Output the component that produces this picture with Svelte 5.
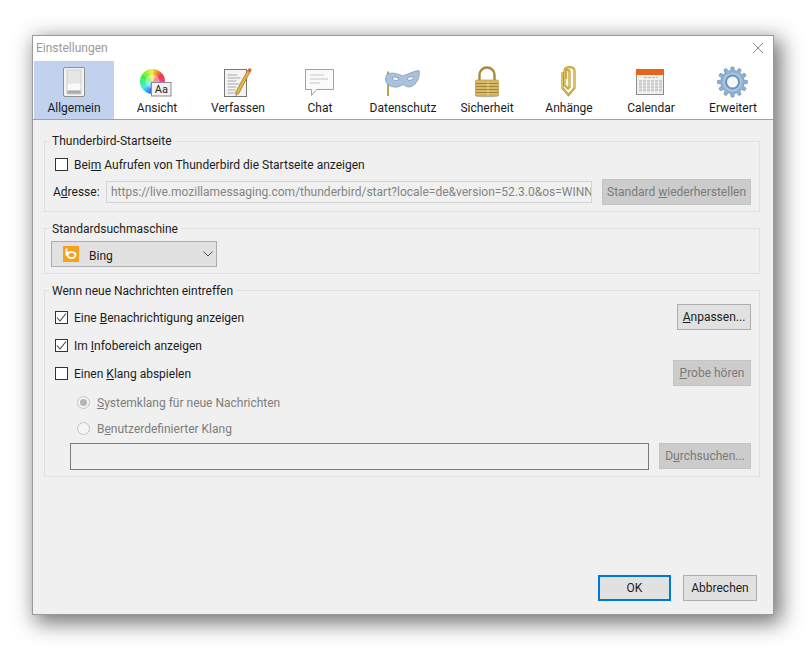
<script>
  const tabs = [
    { label: 'Allgemein', icon: 'general', gap: 0, active: true },
    { label: 'Ansicht', icon: 'view', gap: 3 },
    { label: 'Verfassen', icon: 'compose', gap: 1 },
    { label: 'Chat', icon: 'chat', gap: 2 },
    { label: 'Datenschutz', icon: 'mask', gap: 3 },
    { label: 'Sicherheit', icon: 'lock', gap: 4 },
    { label: 'Anhänge', icon: 'clip', gap: 2 },
    { label: 'Calendar', icon: 'calendar', gap: 2 },
    { label: 'Erweitert', icon: 'gear', gap: 2 }
  ];

  // colour wheel wedges, hue goes backwards clockwise from yellow at the top
  const wedges = [];
  for (let i = 0; i < 36; i++) {
    const a = (i * 10 - 90) * Math.PI / 180;
    const b = ((i + 1.2) * 10 - 90) * Math.PI / 180;
    const r = 12.5, cx = 15.5, cy = 15.5;
    wedges.push({
      d: `M${cx} ${cy}L${(cx + r * Math.cos(a)).toFixed(2)} ${(cy + r * Math.sin(a)).toFixed(2)}A${r} ${r} 0 0 1 ${(cx + r * Math.cos(b)).toFixed(2)} ${(cy + r * Math.sin(b)).toFixed(2)}Z`,
      fill: `hsl(${(50 - i * 10 + 360) % 360}, 85%, 58%)`
    });
  }

  // gear outline with 12 teeth
  function gearPath() {
    const cx = 19.5, cy = 16, outer = 15, root = 11.6, teeth = 12;
    let d = '';
    for (let i = 0; i < teeth; i++) {
      const s = (i / teeth) * Math.PI * 2;
      const w = (Math.PI * 2) / teeth;
      const pts = [
        [root, s - w * 0.32], [outer, s - w * 0.17], [outer, s + w * 0.17], [root, s + w * 0.32]
      ];
      for (const [r, a] of pts) {
        d += (d ? 'L' : 'M') + (cx + r * Math.cos(a)).toFixed(2) + ' ' + (cy + r * Math.sin(a)).toFixed(2);
      }
    }
    return d + 'Z';
  }
  const gear = gearPath();

  const calCols = [5, 9, 13, 17, 21, 25];
  const calRows = [14, 17, 20, 23];
  const clipPath = 'M17 13V5.500c0-2 3.500-2 3.500 0V21l-1.500 1.500-3.500-3.500V5c0-5.300 10-5.300 10 0v17l-6 7-6-7V6';
</script>

<div class="page">
  <div class="dialog">
    <div class="titlebar">
      <span class="title">Einstellungen</span>
      <svg class="close" width="12" height="12" viewBox="0 0 12 12">
        <path d="M1 1L11 11M11 1L1 11" stroke="#8a8a8a" stroke-width="1" fill="none" />
      </svg>
    </div>

    <div class="toolbar">
      {#each tabs as tab}
        <div class="tab" class:active={tab.active} style="margin-left:{tab.gap}px">
          <svg width="40" height="32" viewBox="0 0 40 32">
            {#if tab.icon === 'general'}
              <rect x="9.500" y="1.500" width="21" height="29" rx="1.500" fill="#f4f4f4" stroke="#8f8f8f" />
              <rect x="13" y="4" width="14" height="24" fill="#d8d8d8" stroke="#b5b5b5" stroke-width="0.6" />
              <rect x="13.500" y="4.500" width="13" height="13" fill="#e6e6e6" />
              <rect x="13.500" y="17.500" width="13" height="7" fill="#fafafa" />
              <rect x="13.500" y="24.500" width="13" height="3" fill="#aaa" />
            {:else if tab.icon === 'view'}
              {#each wedges as w}
                <path d={w.d} fill={w.fill} />
              {/each}
              <circle cx="15.500" cy="15.500" r="7" fill="#fff" opacity="0.35" />
              <rect x="14.500" y="16.500" width="19.500" height="13.500" fill="#f2f2f2" stroke="#8b8b8b" />
              <text class="aa" x="24.300" y="27" text-anchor="middle">Aa</text>
            {:else if tab.icon === 'compose'}
              <rect x="6.500" y="3.500" width="22" height="27" fill="#f4f4f2" stroke="#777" />
              <path d="M9.500 9h10M9.500 12h13M9.500 15h9M9.500 18h12M9.500 21h9M9.500 24h8M9.500 27h11" stroke="#a8a8a8" stroke-width="1" />
              <path d="M32 6L21 27l-3 2.500 0.200-4L29.500 4.500z" fill="#e9b63c" stroke="#8a6a1e" stroke-width="0.7" />
              <path d="M32.500 6.500L29.500 4.500l1.500-2.500 2.800 1.500z" fill="#e2535a" />
            {:else if tab.icon === 'chat'}
              <path d="M5.500 3.500h28v20h-17l-5 6v-6h-6z" fill="#fafafa" stroke="#a2a2a2" />
              <path d="M10 9h14M10 13h18M10 17h10" stroke="#c4c4c4" />
            {:else if tab.icon === 'mask'}
              <path d="M5 5.500V30" stroke="#b08a22" stroke-width="1.600" />
              <path d="M4.500 8C10 6 15 8 20 10c5-2 11-5 16-5.500 1 4-.5 10-4 13.500-3 3-7 4-10 1.500-1-1-3-1-4 0-4 3-11 1.500-14-2-2-2.500-2-6.500.5-9.500z" fill="#a9c3de" stroke="#7c97b5" stroke-width="0.8" />
              <path d="M9 12c2-1.500 5-1 7 1-2 2-5 2-7-1zM24 13c2-2.500 5-2.500 7-1.500-2 3-5 3.500-7 1.500z" fill="#fff" stroke="#5f7c9c" stroke-width="0.6" />
            {:else if tab.icon === 'lock'}
              <ellipse cx="20" cy="29.500" rx="12.500" ry="1.800" fill="#999" opacity="0.6" />
              <path d="M12.500 15V8.500a7.500 7 0 0 1 15 0V15" fill="none" stroke="#a88a3c" stroke-width="2.400" />
              <rect x="8.500" y="14" width="23" height="16" rx="1.500" fill="#d8b969" stroke="#a88a3c" stroke-width="0.6" />
              <path d="M9 17.500h22M9 20.500h22M9 23.500h22M9 26.500h22" stroke="#a1842f" stroke-width="1" />
              <path d="M21 15v15" stroke="#eedb9e" stroke-width="1" opacity="0.7" />
            {:else if tab.icon === 'clip'}
              <path d={clipPath} fill="none" stroke="#bd9420" stroke-width="2.200" />
              <path d={clipPath} fill="none" stroke="#f0d98a" stroke-width="0.7" />
            {:else if tab.icon === 'calendar'}
              <rect x="5.500" y="3.500" width="27" height="25" fill="#f3f1ef" stroke="#8d8d8d" />
              <rect x="5" y="3" width="28" height="6" fill="#e8631c" />
              <path d="M13 11.500h14" stroke="#b9b9b9" stroke-width="1.200" stroke-dasharray="3 1" />
              {#each calRows as y}
                {#each calCols as x}
                  <rect x={x + 3} {y} width="3" height="2.400" fill="#c8ccd2" />
                {/each}
              {/each}
            {:else if tab.icon === 'gear'}
              <path d={gear} fill="#8eb1d3" stroke="#6e8fb0" stroke-width="0.7" />
              <circle cx="19.500" cy="16" r="9.500" fill="#a9c6e2" />
              <circle cx="19.500" cy="16" r="7.500" fill="#6f94b8" />
              <circle cx="19.500" cy="16" r="5.500" fill="#f4f6f8" />
            {/if}
          </svg>
          <span>{tab.label}</span>
        </div>
      {/each}
    </div>

    <div class="body">
      <fieldset class="start">
        <legend>Thunderbird-Startseite</legend>
        <label class="check"><i class="box"></i><span>Bei<u>m</u> Aufrufen von Thunderbird die Startseite anzeigen</span></label>
        <div class="address">
          <span class="addr-label">A<u>d</u>resse:</span>
          <div class="field">https://live.mozillamessaging.com/thunderbird/start?locale=de&amp;version=52.3.0&amp;os=WINNT</div>
          <div class="btn off wide">Standard <u>w</u>iederherstellen</div>
        </div>
      </fieldset>

      <fieldset class="search">
        <legend>Standardsuchmaschine</legend>
        <div class="select">
          <svg width="16" height="16" viewBox="0 0 16 16">
            <rect width="16" height="16" fill="#f9a01b" />
            <ellipse cx="8.500" cy="9" rx="4" ry="3" fill="none" stroke="#fff" stroke-width="2" />
            <path d="M3.500 2.500v7" stroke="#fff" stroke-width="2" />
          </svg>
          <span>Bing</span>
          <svg class="chev" width="10" height="6" viewBox="0 0 10 6">
            <path d="M0.500 0.500L5 5l4.500-4.500" fill="none" stroke="#555" />
          </svg>
        </div>
      </fieldset>

      <fieldset class="mail">
        <legend>Wenn neue Nachrichten eintreffen</legend>
        <div class="row first">
          <label class="check"><i class="box on"><svg width="11" height="11" viewBox="0 0 11 11"><path d="M1 5.500L4 9l6-7.500" fill="none" stroke="#444" stroke-width="1.100" /></svg></i><span>Eine <u>B</u>enachrichtigung anzeigen</span></label>
          <div class="btn"><u>A</u>npassen...</div>
        </div>
        <div class="row plain">
          <label class="check"><i class="box on"><svg width="11" height="11" viewBox="0 0 11 11"><path d="M1 5.500L4 9l6-7.500" fill="none" stroke="#444" stroke-width="1.100" /></svg></i><span>Im <u>I</u>nfobereich anzeigen</span></label>
        </div>
        <div class="row">
          <label class="check"><i class="box"></i><span>Einen <u>K</u>lang abspielen</span></label>
          <div class="btn off"><u>P</u>robe hören</div>
        </div>
        <div class="radios">
          <label class="radio"><i class="dot on"></i><span><u>S</u>ystemklang für neue Nachrichten</span></label>
          <label class="radio"><i class="dot"></i><span>B<u>e</u>nutzerdefinierter Klang</span></label>
        </div>
        <div class="file">
          <div class="path"></div>
          <div class="btn off">D<u>u</u>rchsuchen...</div>
        </div>
      </fieldset>

      <div class="footer">
        <div class="btn ok">OK</div>
        <div class="btn">Abbrechen</div>
      </div>
    </div>
  </div>
</div>

<style>
  :global(body) {
    background: #fff;
    font-family: Roboto, "Open Sans", sans-serif;
    font-size: 12px;
    color: #1c1c1c;
  }
  * {
    box-sizing: border-box;
  }
  .page {
    width: 808px;
    height: 648px;
    padding: 35px 0 0 32px;
    overflow: hidden;
  }
  .dialog {
    width: 742px;
    height: 580px;
    border: 1px solid #9a9a9a;
    background: #f0f0f0;
    box-shadow: 5px 6px 20px 2px rgba(0, 0, 0, 0.55);
    display: flex;
    flex-direction: column;
  }
  .titlebar {
    height: 25px;
    background: #fff;
    padding: 0 9px 2px 3px;
    display: flex;
    align-items: center;
    justify-content: space-between;
  }
  .title {
    color: #9a9a9a;
  }
  .toolbar {
    height: 59px;
    background: #fff;
    border-bottom: 1px solid #a0a0a0;
    display: flex;
    padding-left: 1px;
  }
  .tab {
    width: 80px;
    height: 58px;
    display: flex;
    flex-direction: column;
    align-items: center;
    padding-top: 5px;
  }
  .tab svg {
    display: block;
  }
  .tab span {
    margin-top: 2px;
    line-height: 16px;
    white-space: nowrap;
  }
  .tab.active {
    background: #c1d2ee;
  }
  .aa {
    font-size: 11px;
    fill: #222;
  }
  .body {
    flex: 1;
    display: flex;
    flex-direction: column;
    padding: 13px 13px 13px 11px;
    min-height: 0;
  }
  fieldset {
    margin: 0 0 8px;
    padding: 0;
    border: 1px solid #e0e0e0;
    min-width: 0;
  }
  legend {
    padding: 0 3px;
    line-height: 16px;
    margin-right: auto;
  }
  .start {
    height: 79px;
    padding: 7px 8px 0 8px;
  }
  .search {
    height: 54px;
    padding: 5px 0 0 6px;
  }
  .mail {
    height: 195px;
    padding: 6px 8px 0 10px;
  }
  .start legend {
    margin-left: -4px;
  }
  .search legend {
    margin-left: -2px;
  }
  .mail legend {
    margin-left: -6px;
  }
  .search legend,
  .mail legend {
    position: relative;
    top: 1px;
  }
  .check,
  .radio {
    display: flex;
    align-items: center;
    white-space: nowrap;
  }
  .check span,
  .radio span {
    margin-top: 2px;
  }
  .check {
    gap: 6px;
  }
  .radio {
    gap: 7px;
    color: #7d7d7d;
  }
  .box {
    width: 13px;
    height: 13px;
    border: 1px solid #333;
    background: #fff;
    display: flex;
    align-items: center;
    justify-content: center;
  }
  .box svg {
    display: block;
  }
  .start .check {
    margin-left: 2px;
    height: 16px;
  }
  .address {
    display: flex;
    align-items: center;
    margin-top: 7px;
  }
  .addr-label {
    width: 53px;
  }
  .field {
    width: 486px;
    height: 22px;
    border: 1px solid #d4d4d4;
    color: #848484;
    line-height: 20px;
    padding-left: 4px;
    overflow: hidden;
    white-space: nowrap;
  }
  .btn {
    height: 26px;
    line-height: 24px;
    border: 1px solid #adadad;
    background: #e1e1e1;
    text-align: center;
    padding: 0 4px;
    white-space: nowrap;
  }
  .btn.off {
    background: #cccccc;
    border-color: #c4c4c4;
    color: #7a7a7a;
  }
  .btn.wide {
    margin-left: 10px;
    width: 149px;
  }
  .select {
    width: 166px;
    height: 26px;
    border: 1px solid #adadad;
    background: #e1e1e1;
    display: flex;
    align-items: center;
    padding-left: 11px;
    gap: 10px;
  }
  .select svg {
    display: block;
  }
  .select span {
    margin-top: 3px;
  }
  .chev {
    margin-left: auto;
    margin-right: 3px;
  }
  .row {
    display: flex;
    justify-content: space-between;
    align-items: center;
    height: 26px;
    margin-bottom: 2px;
  }
  .row .btn:first-of-type {
    width: 74px;
  }
  .row .btn.off {
    width: 78px;
  }
  .radios {
    margin: 8px 0 0 22px;
    display: flex;
    flex-direction: column;
    gap: 10px;
  }
  .radio {
    height: 16px;
  }
  .dot {
    width: 13px;
    height: 13px;
    border-radius: 50%;
    border: 1px solid #c4c4c4;
    background: #f4f4f4;
    display: flex;
    align-items: center;
    justify-content: center;
  }
  .dot.on::after {
    content: "";
    width: 7px;
    height: 7px;
    border-radius: 50%;
    background: #b4b4b4;
  }
  .file {
    display: flex;
    justify-content: space-between;
    margin: 7px 0 0 15px;
  }
  .path {
    width: 579px;
    height: 27px;
    border: 1px solid #7a7a7a;
  }
  .file .btn {
    width: 92px;
  }
  .footer {
    margin-top: auto;
    display: flex;
    justify-content: flex-end;
    gap: 12px;
    margin-right: 3px;
  }
  .footer .btn {
    width: 74px;
  }
  .footer .btn.ok {
    border: 2px solid #0078d7;
    line-height: 22px;
    width: 73px;
  }
</style>
